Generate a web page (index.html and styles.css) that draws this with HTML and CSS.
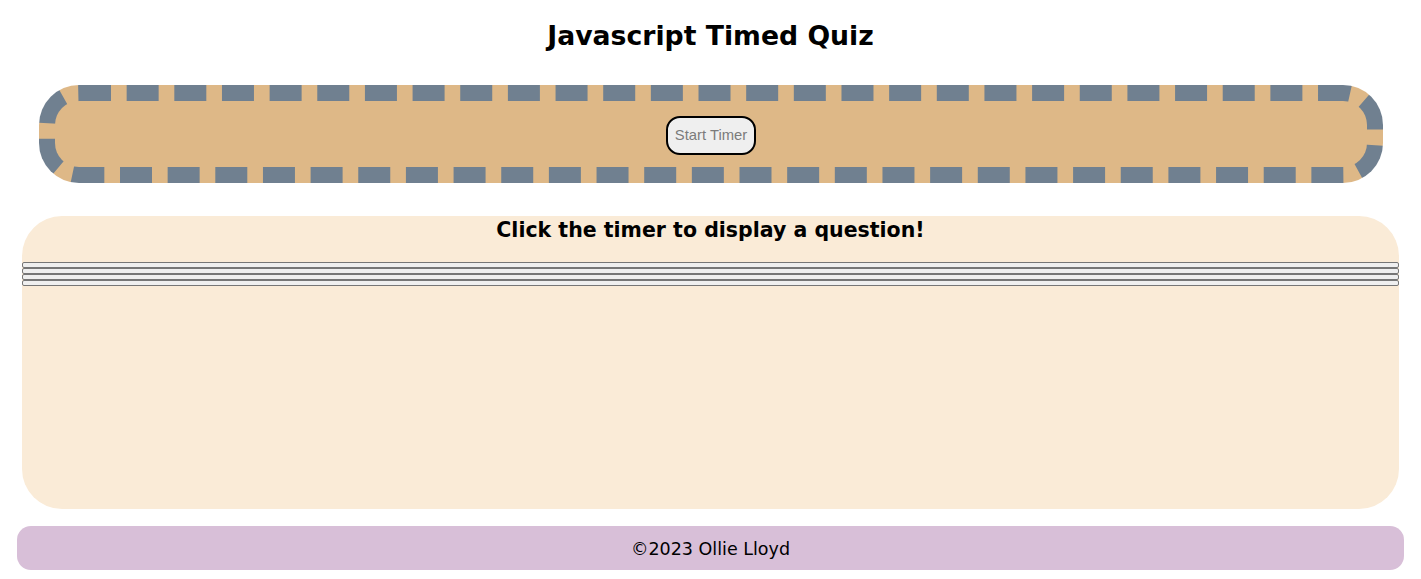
FILE: index.html
```html
<!DOCTYPE html>
<html lang="en">
<head>
<meta charset="utf-8">
<title>Javascript Timed Quiz</title>
<link rel="stylesheet" href="styles.css">
</head>
<body>
<header class="page-header">
  <h1 class="title">Javascript Timed Quiz</h1>
</header>
<main class="main">
  <section class="timer-box">
    <button class="start-btn" type="button">Start Timer</button>
  </section>
  <section class="quiz-box">
    <h2 class="question">Click the timer to display a question!</h2>
    <div class="answers">
      <button class="answer" type="button"></button>
      <button class="answer" type="button"></button>
      <button class="answer" type="button"></button>
      <button class="answer" type="button"></button>
    </div>
  </section>
</main>
<footer class="footer">©2023 Ollie Lloyd</footer>
</body>
</html>
```
FILE: styles.css
```css
html, body {
  margin: 0;
  padding: 0;
  background: #ffffff;
}
body {
  font-family: "DejaVu Sans", Verdana, sans-serif;
  color: #000;
  padding: 0 17px;
}
.page-header {
  display: flex;
  justify-content: center;
  padding-top: 19px;
}
.title {
  margin: 0;
  font-size: 26.7px;
  font-weight: bold;
  line-height: 34px;
}
.main {
  display: flex;
  flex-direction: column;
  padding: 0 5px;
}
.timer-box {
  margin: 32px 16px 0 17px;
  height: 66px;
  border: 16px dashed #708090;
  border-radius: 40px;
  background: #deb887;
  display: flex;
  align-items: center;
  justify-content: center;
}
.start-btn {
  font-family: "Liberation Sans", Arial, sans-serif;
  font-size: 14.8px;
  color: #7b7b7b;
  background: #efefef;
  border: 2px solid #000;
  border-radius: 14px;
  width: 90px;
  height: 39px;
  padding: 0;
  margin-top: 2px;
}
.quiz-box {
  margin-top: 33px;
  height: 293px;
  background: #faebd7;
  border-radius: 40px;
  display: flex;
  flex-direction: column;
}
.question {
  margin: 0;
  padding-top: 1px;
  text-align: center;
  font-size: 20.5px;
  font-weight: bold;
  line-height: 26px;
}
.answers {
  margin-top: 19px;
  display: flex;
  flex-direction: column;
}
.answer {
  display: block;
  width: 100%;
  height: 6px;
  padding: 0;
  margin: 0;
  background: #efefef;
  border: 1px solid #767676;
  border-radius: 2px;
}
.footer {
  margin-top: 17px;
  height: 44px;
  background: #d8bfd8;
  border-radius: 14px;
  display: flex;
  align-items: center;
  justify-content: center;
  font-size: 17.5px;
  padding-top: 2px;
  box-sizing: border-box;
}
```
